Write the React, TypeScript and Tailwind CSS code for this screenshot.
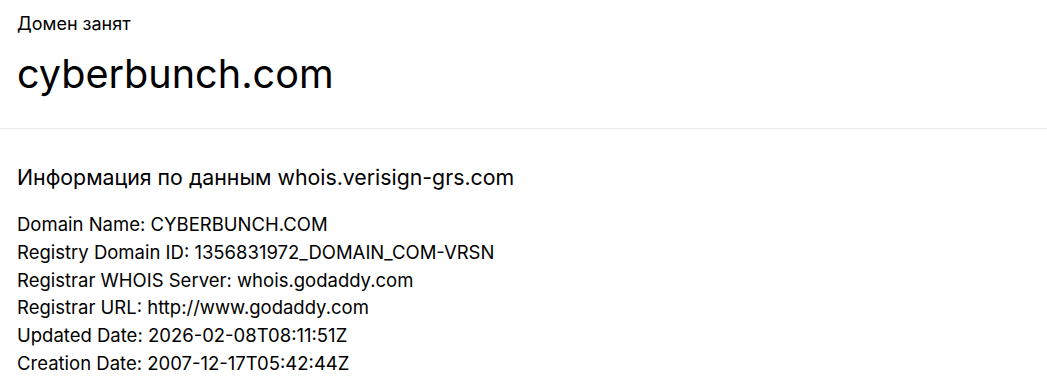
export default function App() {
  const rows = [
    "Domain Name: CYBERBUNCH.COM",
    "Registry Domain ID: 1356831972_DOMAIN_COM-VRSN",
    "Registrar WHOIS Server: whois.godaddy.com",
    "Registrar URL: http://www.godaddy.com",
    "Updated Date: 2026-02-08T08:11:51Z",
    "Creation Date: 2007-12-17T05:42:44Z",
  ];

  return (
    <div className="min-h-screen bg-white text-black font-['Inter',sans-serif]">
      <div className="px-[17px] pt-[12px] pb-[30px] border-b border-[#ebebeb]">
        <div className="text-[18px] leading-[24px]">Домен занят</div>
        <h1 className="mt-[14px] text-[39.6px] leading-[48px] font-normal">cyberbunch.com</h1>
      </div>
      <div className="px-[17px] pt-[33px]">
        <h2 className="text-[21.3px] leading-[30px] font-normal">
          Информация по данным whois.verisign-grs.com
        </h2>
        <div className="mt-[19px] text-[18.5px] leading-[27.8px]">
          {rows.map((r) => (
            <div key={r}>{r}</div>
          ))}
        </div>
      </div>
    </div>
  );
}
